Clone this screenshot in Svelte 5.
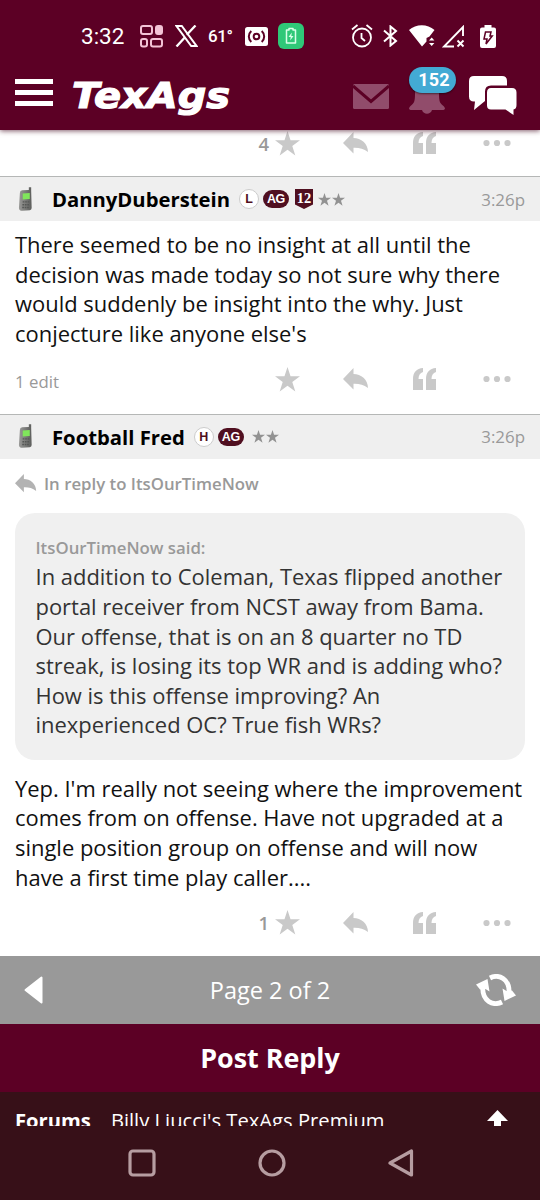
<script>
  const posts = [
    {
      name: 'DannyDuberstein',
      status: 'L',
      twelfth: true,
      time: '3:26p',
      lines: [
        'There seemed to be no insight at all until the',
        'decision was made today so not sure why there',
        'would suddenly be insight into the why. Just',
        "conjecture like anyone else's"
      ],
      edits: '1 edit',
      stars: ''
    },
    {
      name: 'Football Fred',
      status: 'H',
      twelfth: false,
      time: '3:26p',
      replyTo: 'ItsOurTimeNow',
      quote: [
        'In addition to Coleman, Texas flipped another',
        'portal receiver from NCST away from Bama.',
        'Our offense, that is on an 8 quarter no TD',
        'streak, is losing its top WR and is adding who?',
        'How is this offense improving? An',
        'inexperienced OC? True fish WRs?'
      ],
      lines: [
        "Yep. I'm really not seeing where the improvement",
        'comes from on offense. Have not upgraded at a',
        'single position group on offense and will now',
        'have a first time play caller....'
      ],
      edits: '',
      stars: '1'
    }
  ];
</script>

{#snippet star(size)}
  <svg width={size} height={size} viewBox="0 0 24 24" fill="currentColor">
    <path d="M12 0l2.9 8.8H24l-7.4 5.5 2.9 9.2L12 18l-7.5 5.5 2.9-9.2L0 8.8h9.1z" />
  </svg>
{/snippet}

{#snippet arrow(width)}
  <svg class="arrow" {width} height={width * 0.85} viewBox="0 0 26 22" fill="currentColor">
    <path d="M0 11 10.500 0v6C18 6 25 11.500 25 20 20.500 16.500 16 15.500 10.500 15.700V21.500z" />
  </svg>
{/snippet}

{#snippet actions(edits, count)}
  <div class="actions">
    <span class="edits">{edits}</span>
    <span class="count">{count}</span>
    <span class="star">{@render star(25)}</span>
    <span class="reply">{@render arrow(26)}</span>
    <svg class="quotes" width="24" height="22" viewBox="0 0 24 22" fill="currentColor">
      <path d="M0 22V11C0 4.500 3.500.5 10 0v4C7 5 5.500 7.500 5.500 11H10v11zM13 22V11C13 4.500 16.500.5 23 0v4c-3 1-4.500 3.500-4.500 7H23v11z" />
    </svg>
    <svg width="28" height="8" viewBox="0 0 28 8" fill="currentColor">
      <circle cx="3.500" cy="4" r="3.100" /><circle cx="14" cy="4" r="3.100" /><circle cx="24.500" cy="4" r="3.100" />
    </svg>
  </div>
{/snippet}

<div class="screen">
  <header>
    <div class="status">
      <span class="clock">3:32</span>
      <svg class="apps" width="23" height="23" viewBox="0 0 23 23" fill="none" stroke="#f3c3d6" stroke-width="2">
        <rect x="1" y="1" width="11" height="8" rx="2" />
        <rect x="16" y="1" width="6" height="8" rx="2" fill="#f3c3d6" />
        <rect x="1" y="14" width="6" height="7.500" rx="2" />
        <rect x="11" y="14" width="11" height="7.500" rx="2" />
      </svg>
      <svg class="x" width="23" height="22" viewBox="0 0 23 22" fill="none" stroke="#fff">
        <path d="M1.500 1h5.300l14.700 20h-5.300z" stroke-width="2" />
        <path d="M20.500.5l-8.700 9.300M10 12.200 1.500 21.500" stroke-width="2.300" />
      </svg>
      <span class="temp">61°</span>
      <svg class="cast" width="23" height="19" viewBox="0 0 23 19">
        <rect width="23" height="19" rx="2.500" fill="#fff" />
        <g fill="none" stroke="#5c0025" stroke-width="2">
          <circle cx="11.500" cy="9.500" r="2.800" />
          <path d="M6.300 4c-3.300 3-3.300 8 0 11M16.700 4c3.300 3 3.300 8 0 11" />
        </g>
      </svg>
      <svg class="saver" width="26" height="26" viewBox="0 0 26 26">
        <rect width="26" height="26" rx="6" fill="#2fc878" />
        <path d="M11 5.500h4v1.500h2.500v13h-9V7H11z" fill="none" stroke="#d9ffe9" stroke-width="1.500" stroke-linejoin="round" />
        <path d="M13.800 9.500l-3.300 4.500h2.200L12.200 17.500l3.300-4.500h-2.200z" fill="#d9ffe9" />
      </svg>
      <svg class="alarm" width="22" height="24" viewBox="0 0 22 24" fill="none" stroke="#fff" stroke-width="1.800">
        <circle cx="11" cy="13.500" r="9" />
        <path d="M1 5.500 6.500 1M21 5.500 15.500 1M10.500 9v5l3.500 3" />
      </svg>
      <svg class="bluetooth" width="15" height="22" viewBox="0 0 15 22" fill="none" stroke="#fff" stroke-width="2">
        <path d="M1 5.500l12 10.500-5.500 4.500v-19L13 6 1 16.500" />
      </svg>
      <svg class="wifi" width="27" height="22" viewBox="0 0 27 22" fill="#fff">
        <path d="M0 5C7-1.300 18.500-1.300 25.500 5l-5 6.500-3 1.500v3.500L13 21.500z" />
        <path d="M20 15.500l2.700-3 2.700 3zM20 18l2.700 3 2.700-3z" />
      </svg>
      <svg class="signal" width="23" height="23" viewBox="0 0 23 23" fill="none" stroke="#fff" stroke-width="1.900">
        <path d="M21 11V2L2 21.500h10M15.500 15.500l6 6M21.500 15.500l-6 6" />
      </svg>
      <svg class="battery" width="16" height="23" viewBox="0 0 16 23">
        <path d="M4.500 0h7v2.500H14a2 2 0 0 1 2 2V21a2 2 0 0 1-2 2H2a2 2 0 0 1-2-2V4.500a2 2 0 0 1 2-2h2.500z" fill="#fff" />
        <path d="M5.500 7h5.500l-1 4h2.200L6 19l1-5H4z" fill="none" stroke="#5c0025" stroke-width="1.500" />
      </svg>
    </div>

    <div class="toolbar">
      <div class="burger"><i></i><i></i><i></i></div>
      <svg class="logo" width="158" height="42" viewBox="0 0 158 42" role="img" aria-label="TexAgs">
        <text x="-1" y="30.500" textLength="158" lengthAdjust="spacingAndGlyphs">TexAgs</text>
      </svg>
      <svg class="mail" width="36" height="25" viewBox="0 0 36 25">
        <rect width="36" height="25" rx="1.500" fill="#914c6b" />
        <path d="M0 2l18 15.500L36 2" fill="none" stroke="#5c0025" stroke-width="3" />
      </svg>
      <div class="alerts">
        <svg width="36" height="32" viewBox="0 0 36 32" fill="#914c6b">
          <path d="M18 0c9 0 12 5 12 12 0 8 1 9 4.500 12 2.500 2.500 1.500 4-1 4H23c-1.500 5-8.500 5-10 0H2.500c-2.500 0-3.500-1.500-1-4C5 21 6 20 6 12 6 5 9 0 18 0z" />
        </svg>
        <span class="badge">152</span>
      </div>
      <svg class="chat" width="48" height="39" viewBox="0 0 48 39" fill="#fff">
        <path d="M5 0h28q5 0 5 5v4.500H22q-6 0-6 6V25l-11 9 1-8.500H5q-5 0-5-5V5q0-5 5-5z" />
        <path d="M22 12h21q4.500 0 4.500 4.500V29q0 4-3 4.500V39L36.500 33.500H22q-4 0-4-4V16.500q0-4.500 4-4.500z" />
      </svg>
    </div>
  </header>

  <main>
    <div class="previous">{@render actions('', '4')}</div>
    {#each posts as post}
      <article>
        <div class="author">
          <svg class="phone" width="16" height="25" viewBox="0 0 17 26">
            <defs>
              <linearGradient id="shell"><stop stop-color="#9a9a98" /><stop offset="1" stop-color="#5c5d5b" /></linearGradient>
            </defs>
            <path d="M11.500 0H14v4l.5 18q0 2-2 2.300l-8 .7Q1 25 1 22L2 6q0-2.500 2.500-2.700l7-.3z" fill="url(#shell)" />
            <path d="M5 6.500l7.500-.5v6.500l-7.500.5z" fill="#80e65b" />
            <path d="M5 15.500h7M4.700 18.500h7M4.500 21.500h7" stroke="#555755" stroke-width="1.500" stroke-dasharray="1.800 .8" />
          </svg>
          <b class="name">{post.name}</b>
          <span class="letter">{post.status}</span>
          <span class="ag">AG</span>
          {#if post.twelfth}
            <svg class="twelfth" width="18" height="20" viewBox="0 0 18 20">
              <path d="M0 0h18v15.500L9 20l-9-4.500z" fill="#500f20" />
              <text x="9" y="13.500" text-anchor="middle">12</text>
            </svg>
          {/if}
          <span class="rank">{@render star(13)}{@render star(13)}</span>
          <time>{post.time}</time>
        </div>
        {#if post.quote}
          <div class="in-reply">{@render arrow(22)}<span>In reply to {post.replyTo}</span></div>
          <blockquote>
            <cite>{post.replyTo} said:</cite>
            {#each post.quote as line}<div class="line">{line}</div>{/each}
          </blockquote>
        {/if}
        <div class="body">
          {#each post.lines as line}<div class="line">{line}</div>{/each}
        </div>
        {@render actions(post.edits, post.stars)}
      </article>
    {/each}
  </main>

  <nav class="pager">
    <svg width="19" height="28" viewBox="0 0 19 28"><path d="M17.500 1.500v25L1.500 14z" fill="#fff" stroke="#fff" stroke-width="2" stroke-linejoin="round" /></svg>
    <span>Page 2 of 2</span>
    <svg width="40" height="32" viewBox="0 0 40 32">
      <path d="M14 4C23-.5 33.500 5 33 18M26 28C17 32.500 6 27 6.800 13" fill="none" stroke="#fff" stroke-width="4.800" />
      <path d="M0 10.500 11.500 5l2 12.500-4-2.500-5.500.5zM40 21.500 28.500 27l-2-12.500 4 2.500 5.500-.5z" fill="#fff" />
    </svg>
  </nav>
  <div class="post-reply">Post Reply</div>
  <footer>
    <div class="crumbs">
      <b>Forums</b>
      <span>Billy Liucci's TexAgs Premium</span>
      <svg width="21" height="22" viewBox="0 0 21 22" fill="#fff"><path d="M10.500 0 21 11h-7v11H7V11H0z" /></svg>
    </div>
    <div class="system">
      <svg width="28" height="28" viewBox="0 0 28 28"><rect x="2" y="2" width="24" height="24" rx="3" /></svg>
      <svg width="28" height="28" viewBox="0 0 28 28"><circle cx="14" cy="14" r="12" /></svg>
      <svg width="26" height="28" viewBox="0 0 26 28"><path d="M23.500 2v24L2 14z" /></svg>
    </div>
  </footer>
</div>

<style>
  :global(body) {
    margin: 0;
    background: #fff;
  }

  .screen {
    width: 540px;
    height: 1200px;
    overflow: hidden;
    display: flex;
    flex-direction: column;
    font-family: 'Open Sans', 'Noto Sans', sans-serif;
    color: #111;
  }

  svg {
    display: block;
    flex: none;
  }

  header {
    position: relative;
    z-index: 1;
    height: 130px;
    flex: none;
    background: #5c0025;
    box-shadow: 0 1px 5px rgba(60, 0, 25, 0.65);
    color: #fff;
  }

  .status {
    display: flex;
    align-items: center;
    height: 60px;
    padding-top: 6px;
    padding-left: 81px;
    font-family: Roboto, sans-serif;
  }

  .clock {
    width: 59px;
    font-size: 22.5px;
  }

  .x {
    margin-left: 12px;
  }

  .temp {
    width: 25px;
    margin-left: 10px;
    font-size: 17px;
    font-weight: 500;
    letter-spacing: -0.4px;
  }

  .cast {
    margin-left: 12px;
  }

  .saver {
    margin-left: 10px;
  }

  .alarm {
    margin-left: 47px;
  }

  .bluetooth {
    margin-left: 10px;
  }

  .wifi {
    margin-left: 11px;
  }

  .signal {
    margin-left: 6px;
  }

  .battery {
    margin-left: 15px;
  }

  .toolbar {
    display: flex;
    align-items: flex-start;
    height: 64px;
    padding-left: 15px;
  }

  .burger {
    display: flex;
    flex-direction: column;
    gap: 6px;
    width: 38px;
    margin-top: 13px;
  }

  .burger i {
    height: 5px;
    background: #fff;
  }

  .logo {
    margin-top: 11px;
    margin-left: 20px;
    overflow: visible;
  }

  .logo text {
    font: italic bold 35.5px 'DejaVu Sans', sans-serif;
    fill: #fff;
    stroke: #fff;
    stroke-width: 1.2px;
  }

  .mail {
    margin-top: 18px;
    margin-left: 122px;
  }

  .alerts {
    position: relative;
    margin-top: 16px;
    margin-left: 20px;
  }

  .badge {
    position: absolute;
    left: 0;
    top: -15px;
    width: 47px;
    height: 26px;
    border-radius: 13px;
    background: #43aad4;
    box-shadow: 0 1px 2px rgba(0, 0, 0, 0.5);
    font: bold 18px/26px Roboto, sans-serif;
    letter-spacing: 0.2px;
    text-indent: 3px;
    text-align: center;
  }

  .chat {
    margin-top: 10px;
    margin-left: 24px;
  }

  main {
    height: 826px;
    flex: none;
    overflow: hidden;
  }

  .previous {
    height: 46px;
    display: flex;
    align-items: flex-start;
  }

  .actions {
    display: flex;
    align-items: center;
    width: 510px;
    height: 26px;
    padding: 0 15px;
    color: #c9c9c9;
  }

  .edits {
    width: 225px;
    padding-top: 4px;
    color: #999;
    font-size: 16.8px;
  }

  .count {
    width: 29px;
    text-align: right;
    color: #999;
    font-size: 18.5px;
    font-weight: 600;
  }

  .star {
    margin-left: 6px;
  }

  .reply {
    margin-left: 43px;
  }

  .quotes {
    margin-left: 44px;
    margin-right: 46px;
  }

  .author {
    display: flex;
    align-items: center;
    height: 44px;
    border-top: 1px solid #b5b7b6;
    background: #efefef;
  }

  .phone {
    margin-left: 18px;
  }

  .name {
    margin-left: 18px;
    color: #000;
    font-size: 20.25px;
    font-weight: 700;
  }

  .letter {
    width: 18px;
    height: 18px;
    margin-left: 9px;
    border: 1px solid #ccc;
    border-radius: 50%;
    background: #fff;
    color: #500f20;
    font: bold 12.5px/18px 'Liberation Sans', sans-serif;
    text-align: center;
  }

  .ag {
    width: 26px;
    height: 18px;
    margin-left: 4px;
    border-radius: 9px;
    background: #500f20;
    color: #fff;
    font: bold 12.5px/18px 'Liberation Sans', sans-serif;
    letter-spacing: -0.5px;
    text-align: center;
  }

  .twelfth {
    margin-left: 6px;
  }

  .twelfth text {
    font: bold 14.5px 'Liberation Serif', serif;
    fill: #fff;
  }

  .rank {
    display: flex;
    gap: 1px;
    margin-left: 8px;
    color: #929292;
  }

  .twelfth + .rank {
    margin-left: 5px;
  }

  time {
    margin-left: auto;
    margin-right: 15px;
    color: #999;
    font-size: 16.9px;
  }

  .body {
    padding: 9px 15px 0;
  }

  .line {
    height: 29.65px;
    font-size: 21.94px;
    line-height: 29.65px;
    white-space: nowrap;
  }

  article .actions {
    height: 61.2px;
    padding-bottom: 4px;
  }

  .in-reply {
    display: flex;
    align-items: center;
    gap: 7px;
    height: 50px;
    padding-left: 15px;
    color: #999;
    font-size: 16.8px;
    font-weight: 600;
  }

  .in-reply :global(.arrow) {
    color: #b3b3b3;
  }

  blockquote {
    height: 222px;
    margin: 4px 15px 5px;
    padding: 25px 20.5px 0;
    border-radius: 20px;
    background: #f0f0f0;
    color: #333;
  }

  cite {
    display: block;
    height: 24.5px;
    color: #999;
    font-size: 16.8px;
    font-style: normal;
    font-weight: 600;
    line-height: 20px;
  }

  .pager {
    display: grid;
    grid-template-columns: 40px 1fr 40px;
    align-items: center;
    height: 68px;
    flex: none;
    padding: 0 24px;
    background: #999;
    color: #fff;
    font-size: 23.5px;
    text-align: center;
  }

  .post-reply {
    height: 68px;
    flex: none;
    background: #5c0025;
    color: #fff;
    font-size: 26.9px;
    font-weight: 700;
    line-height: 68px;
    text-align: center;
  }

  footer {
    flex: 1;
    background: #371018;
    color: #fff;
  }

  .crumbs {
    display: flex;
    height: 34px;
    overflow: hidden;
    line-height: 56px;
    padding: 0 15px;
    font-size: 20.2px;
  }

  .crumbs span {
    margin-left: 20px;
  }

  .crumbs svg {
    margin: 18px 17px 0 auto;
  }

  .system {
    display: flex;
    align-items: center;
    height: 74px;
    padding-left: 128px;
    gap: 102px;
  }

  .system svg {
    fill: none;
    stroke: #b69da1;
    stroke-width: 3.2px;
    stroke-linejoin: round;
  }
</style>
